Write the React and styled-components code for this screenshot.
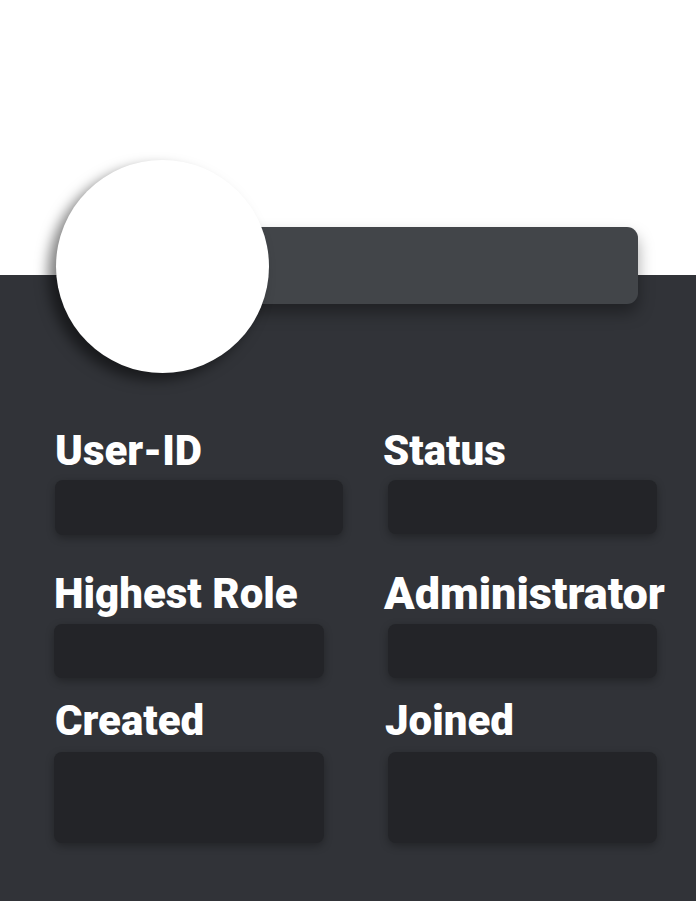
import React from "react";
import styled, { createGlobalStyle } from "styled-components";

const Global = createGlobalStyle`
  html, body { margin: 0; padding: 0; background: #ffffff; }
  body { font-family: Roboto, "Liberation Sans", sans-serif; }
`;

const Page = styled.div`
  display: flex;
  flex-direction: column;
  min-height: 901px;
  background: #ffffff;
`;

const Banner = styled.div`
  height: 275px;
  background: #ffffff;
  flex-shrink: 0;
`;

const Panel = styled.div`
  flex: 1;
  background: #313338;
  padding: 0 0 40px 0;
`;

const ProfileRow = styled.div`
  display: flex;
  align-items: center;
  margin-top: -115px;
  padding-left: 56px;
`;

const Avatar = styled.div`
  position: relative;
  z-index: 2;
  width: 213px;
  height: 213px;
  border-radius: 50%;
  background: #ffffff;
  flex-shrink: 0;
  box-shadow: -8px 7px 13px rgba(0, 0, 0, 0.5);
`;

const NameBar = styled.div`
  position: relative;
  z-index: 1;
  margin-left: -40px;
  width: 409px;
  height: 77px;
  margin-top: -2px;
  background: #424549;
  border-radius: 11px;
  box-shadow: 0 9px 16px rgba(0, 0, 0, 0.35);
`;

const Grid = styled.div`
  display: grid;
  grid-template-columns: 331px 1fr;
  padding-left: 53px;
  margin-top: 53px;
`;

const Field = styled.div`
  display: flex;
  flex-direction: column;
  margin-top: ${(p) => p.$top || 0}px;
`;

const Label = styled.div`
  font-family: Roboto, "Liberation Sans", sans-serif;
  font-weight: 900;
  font-size: ${(p) => p.$size || 42}px;
  line-height: 49px;
  color: #ffffff;
  white-space: nowrap;
  margin-left: ${(p) => p.$shift || 0}px;
`;

const ValueBox = styled.div`
  margin-top: ${(p) => p.$gap}px;
  margin-left: ${(p) => p.$indent}px;
  width: ${(p) => p.$w}px;
  height: ${(p) => p.$h}px;
  background: #232428;
  border-radius: 8px;
  box-shadow: 0 3px 8px rgba(0, 0, 0, 0.3);
`;

const fields = [
  { label: "User-ID", top: 0, gap: 5, w: 288, h: 55, indent: 2, shift: 2 },
  { label: "Status", top: 0, gap: 5, w: 269, h: 54, indent: 4, shift: -1 },
  { label: "Highest Role", top: 34, gap: 6, w: 270, h: 54, indent: 1, shift: 1 },
  { label: "Administrator", top: 34, gap: 6, w: 269, h: 54, indent: 4, shift: 0, size: 45 },
  { label: "Created", top: 18, gap: 7, w: 270, h: 91, indent: 1, shift: 2 },
  { label: "Joined", top: 18, gap: 7, w: 269, h: 91, indent: 4, shift: 1 },
];

export default function App() {
  return (
    <>
      <Global />
      <Page>
        <Banner />
        <Panel>
          <ProfileRow>
            <Avatar />
            <NameBar />
          </ProfileRow>
          <Grid>
            {fields.map((f) => (
              <Field key={f.label} $top={f.top}>
                <Label $shift={f.shift} $size={f.size}>{f.label}</Label>
                <ValueBox $gap={f.gap} $w={f.w} $h={f.h} $indent={f.indent} />
              </Field>
            ))}
          </Grid>
        </Panel>
      </Page>
    </>
  );
}
